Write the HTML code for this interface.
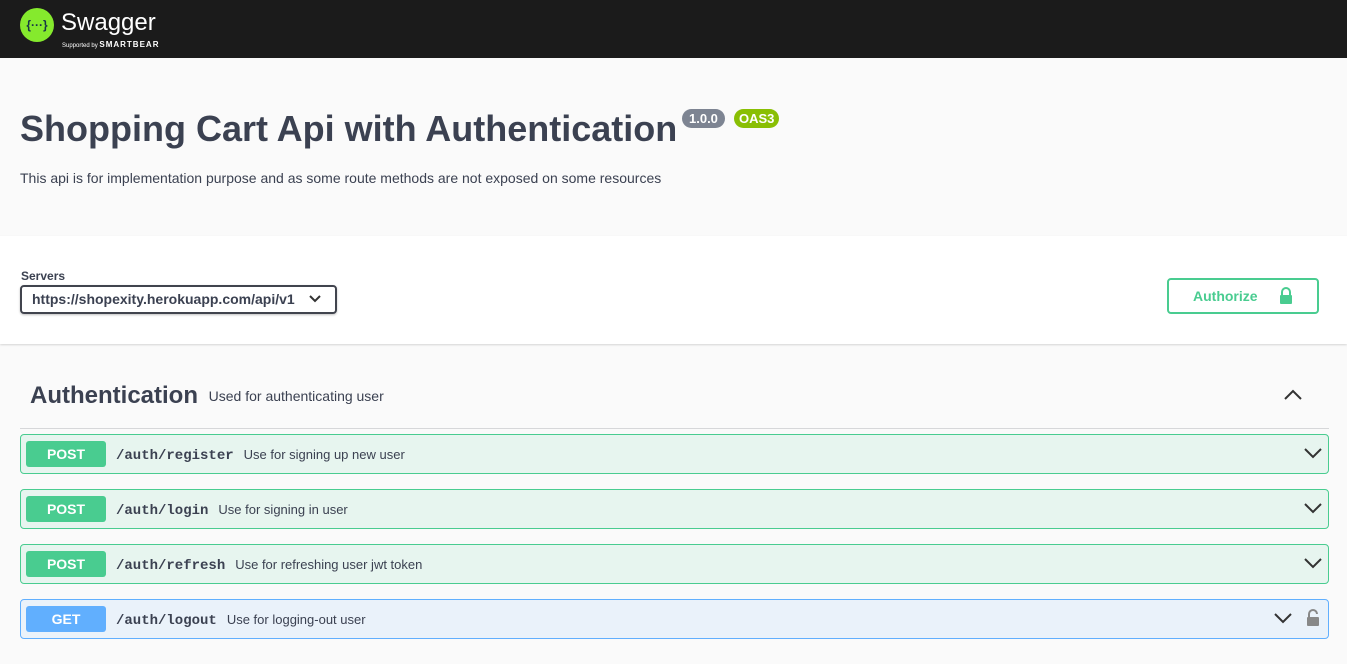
<!DOCTYPE html>
<html><head><style>
*{box-sizing:border-box;margin:0;padding:0}
body{width:1347px;height:664px;overflow:hidden;background:#fafafa;font-family:"Liberation Sans",sans-serif;color:#3b4151;position:relative}
.top{position:absolute;left:0;top:0;width:1347px;height:58px;background:#1b1b1b}
.info{position:absolute;top:58px;left:0;width:1347px;height:178px;background:#fafafa}
.srv{position:absolute;top:236px;left:0;width:1347px;height:108px;background:#fff;box-shadow:0 1px 2px rgba(0,0,0,.15)}
.op{position:absolute;left:20px;width:1309px;height:40px;border:1px solid #49cc90;background:rgba(73,204,144,.1);border-radius:4px}
.op.get{border-color:#61affe;background:rgba(97,175,254,.1)}
.m{position:absolute;left:5px;top:6px;width:80px;height:26px;border-radius:3px;background:#49cc90;color:#fff;font-weight:bold;font-size:14px;text-align:center;line-height:26px}
.get .m{background:#61affe}
.p{position:absolute;left:95px;top:12px;font-family:"Liberation Mono",monospace;font-weight:bold;font-size:14px}
.d{font-family:"Liberation Sans",sans-serif;font-weight:normal;font-size:13px;margin-left:10px}
.ch{position:absolute;right:6px;top:12px}
</style></head><body>
<div class="top">
<svg style="position:absolute;left:20px;top:8px" width="34" height="34"><circle cx="17" cy="17" r="17" fill="#85ea2d"/><text x="17" y="21" text-anchor="middle" font-family="Liberation Sans" font-weight="bold" font-size="12" fill="#173647">{···}</text></svg>
<div style="position:absolute;left:61px;top:9px;color:#fff;font-size:24px">Swagger</div>
<div style="position:absolute;left:62px;top:40px;color:#fff;font-size:6px">Supported by <b style="font-size:8px;letter-spacing:1px">SMARTBEAR</b></div>
</div>
<div class="info">
<div style="position:absolute;left:20px;top:50px;font-size:36px;font-weight:bold">Shopping Cart Api with Authentication</div>
<div style="position:absolute;left:682px;top:51px;background:#7d8492;color:#fff;font-size:13px;font-weight:bold;border-radius:10px;padding:2px 7px">1.0.0</div>
<div style="position:absolute;left:734px;top:51px;background:#89bf04;color:#fff;font-size:13px;font-weight:bold;border-radius:10px;padding:2px 5px">OAS3</div>
<div style="position:absolute;left:20px;top:112px;font-size:14px">This api is for implementation purpose and as some route methods are not exposed on some resources</div>
</div>
<div class="srv">
<div style="position:absolute;left:21px;top:33px;font-size:12px;font-weight:bold">Servers</div>
<div style="position:absolute;left:20px;top:49px;width:317px;height:29px;border:2px solid #41444e;border-radius:4px;box-shadow:0 1px 2px rgba(0,0,0,.25);font-size:14px;font-weight:bold;padding:4px 10px">https://shopexity.herokuapp.com/api/v1 <svg style="position:absolute;right:14px;top:8px" width="12" height="8"><path d="M1 1l5 5 5-5" stroke="#333" stroke-width="2" fill="none"/></svg></div>
<div style="position:absolute;left:1167px;top:42px;width:152px;height:36px;border:2px solid #49cc90;border-radius:4px;color:#49cc90;font-weight:bold;font-size:14px;padding:8px 24px">Authorize <svg style="position:absolute;right:24px;top:7px" width="14" height="18"><path d="M3 8V5a4 4 0 0 1 8 0v3" stroke="#49cc90" stroke-width="2" fill="none"/><rect x="1" y="8" width="12" height="9" rx="1" fill="#49cc90"/></svg></div>
</div>
<div style="position:absolute;left:30px;top:382px;font-size:24px;font-weight:bold">Authentication <span style="font-size:14px;font-weight:normal;margin-left:4px;position:relative;top:-2px">Used for authenticating user</span></div>
<svg style="position:absolute;left:1284px;top:389px" width="18" height="12"><path d="M1 10l8-8 8 8" stroke="#333" stroke-width="2" fill="none"/></svg>
<div style="position:absolute;left:20px;top:428px;width:1309px;height:1px;background:#d6d7d9"></div>
<div class="op" style="top:434px"><div class="m">POST</div><div class="p">/auth/register<span class="d">Use for signing up new user</span></div><svg class="ch" width="18" height="12"><path d="M1 2l8 8 8-8" stroke="#333" stroke-width="2" fill="none"/></svg></div>
<div class="op" style="top:489px"><div class="m">POST</div><div class="p">/auth/login<span class="d">Use for signing in user</span></div><svg class="ch" width="18" height="12"><path d="M1 2l8 8 8-8" stroke="#333" stroke-width="2" fill="none"/></svg></div>
<div class="op" style="top:544px"><div class="m">POST</div><div class="p">/auth/refresh<span class="d">Use for refreshing user jwt token</span></div><svg class="ch" width="18" height="12"><path d="M1 2l8 8 8-8" stroke="#333" stroke-width="2" fill="none"/></svg></div>
<div class="op get" style="top:599px"><div class="m">GET</div><div class="p">/auth/logout<span class="d">Use for logging-out user</span></div><svg class="ch" style="right:36px" width="18" height="12"><path d="M1 2l8 8 8-8" stroke="#333" stroke-width="2" fill="none"/></svg><svg style="position:absolute;right:8px;top:9px" width="14" height="18"><path d="M3 8V5a4 4 0 0 1 8 0" stroke="#888" stroke-width="2" fill="none"/><rect x="1" y="8" width="12" height="9" rx="1" fill="#888"/></svg></div>
</body></html>
